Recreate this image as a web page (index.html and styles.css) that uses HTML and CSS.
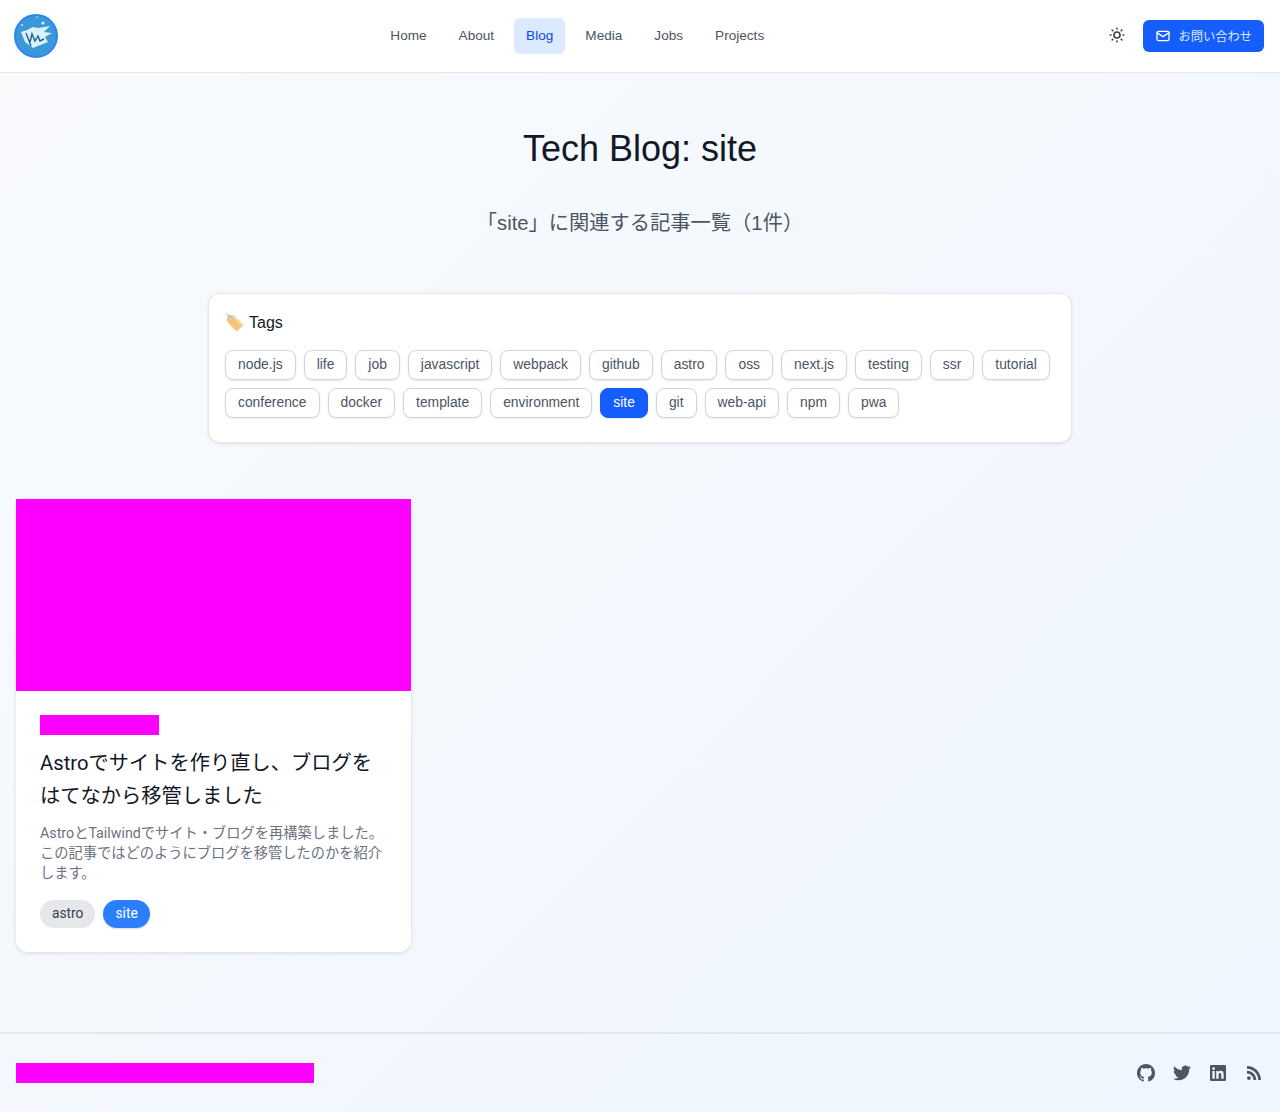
FILE: index.html
```html
<!DOCTYPE html>
<html lang="ja">
  <head>
    <meta charset="UTF-8" />
    <meta name="viewport" content="width=device-width, initial-scale=1.0" />
    <title>Tech Blog: site</title>
    <link rel="stylesheet" href="styles.css">
  </head>
  <body>
    <header class="site-header">
      <a class="logo" href="#">
        <svg viewBox="0 0 44 44" width="44" height="44">
          <circle cx="22" cy="22" r="21" fill="#3a97d8" stroke="#2b86f0" stroke-width="2" />
          <circle cx="29" cy="9" r="1.6" fill="#d8eefa" />
          <circle cx="8" cy="11" r="1" fill="#d8eefa" />
          <circle cx="23" cy="3" r="0.8" fill="#d8eefa" />
          <path d="M7 18 L13 16 L19 13 L24 14 L36 12 L30 18 L38 19 L31 23 L34 28 L19 34 L11 28 Z" fill="#d9f1fb" />
          <path d="M12 19 L17 32 M16 28 L18 20 L21 27 L24 22 L26 27 L30 25" fill="none" stroke="#1d5f86" stroke-width="1.4" />
        </svg>
      </a>
      <nav class="main-nav">
        <a href="#">Home</a>
        <a href="#">About</a>
        <a href="#" class="active">Blog</a>
        <a href="#">Media</a>
        <a href="#">Jobs</a>
        <a href="#">Projects</a>
      </nav>
      <div class="header-actions">
        <button class="theme-btn" type="button" aria-label="theme">
          <svg viewBox="0 0 24 24" width="18" height="18" fill="none" stroke="#374151" stroke-width="2.2" stroke-linecap="round" stroke-linejoin="round">
            <path d="M12 12m-4 0a4 4 0 1 0 8 0a4 4 0 1 0 -8 0" />
            <path d="M3 12h1m8 -9v1m8 8h1m-9 8v1m-6.4 -15.4l.7 .7m12.1 -.7l-.7 .7m0 11.4l.7 .7m-12.1 -.7l-.7 .7" />
          </svg>
        </button>
        <a class="contact-btn" href="#">
          <svg viewBox="0 0 24 24" width="16" height="16" fill="none" stroke="#fff" stroke-width="2" stroke-linecap="round" stroke-linejoin="round">
            <path d="M3 7a2 2 0 0 1 2 -2h14a2 2 0 0 1 2 2v10a2 2 0 0 1 -2 2h-14a2 2 0 0 1 -2 -2v-10z" />
            <path d="M3 7l9 6l9 -6" />
          </svg>
          お問い合わせ
        </a>
      </div>
    </header>

    <main class="content">
      <h1>Tech Blog: site</h1>
      <p class="subtitle">「site」に関連する記事一覧（1件）</p>

      <section class="tags-card">
        <h2>
          <svg viewBox="0 0 20 20" width="20" height="20">
            <path d="M2 5 L3 2 L9 2.5 L18.5 12 L11.5 18.5 L2.5 9 Z" fill="#f7c27a" />
            <path d="M9 2.5 L18.5 12 L17 13.5 L7.5 4 Z" fill="#fbd79f" />
            <circle cx="5.5" cy="5.5" r="1.4" fill="#fff" stroke="#8fb8c9" stroke-width="0.8" />
            <path d="M1 2 C3 0.5 6 2 5.5 5.5" fill="none" stroke="#8fb8c9" stroke-width="0.8" />
          </svg>
          Tags
        </h2>
        <div class="tag-list">
          <a href="#" class="tag">node.js</a>
          <a href="#" class="tag">life</a>
          <a href="#" class="tag">job</a>
          <a href="#" class="tag">javascript</a>
          <a href="#" class="tag">webpack</a>
          <a href="#" class="tag">github</a>
          <a href="#" class="tag">astro</a>
          <a href="#" class="tag">oss</a>
          <a href="#" class="tag">next.js</a>
          <a href="#" class="tag">testing</a>
          <a href="#" class="tag">ssr</a>
          <a href="#" class="tag">tutorial</a>
          <a href="#" class="tag">conference</a>
          <a href="#" class="tag">docker</a>
          <a href="#" class="tag">template</a>
          <a href="#" class="tag">environment</a>
          <a href="#" class="tag active">site</a>
          <a href="#" class="tag">git</a>
          <a href="#" class="tag">web-api</a>
          <a href="#" class="tag">npm</a>
          <a href="#" class="tag">pwa</a>
        </div>
      </section>

      <div class="post-grid">
        <article class="post-card">
          <div class="post-image"></div>
          <div class="post-body">
            <div class="post-date"></div>
            <h3>Astroでサイトを作り直し、ブログをはてなから移管しました</h3>
            <p>AstroとTailwindでサイト・ブログを再構築しました。この記事ではどのようにブログを移管したのかを紹介します。</p>
            <div class="post-tags">
              <a href="#" class="pill">astro</a>
              <a href="#" class="pill current">site</a>
            </div>
          </div>
        </article>
      </div>
    </main>

    <footer class="site-footer">
      <div class="copyright"></div>
      <div class="social">
        <a href="#" aria-label="github">
          <svg viewBox="0 0 16 16" width="18" height="18"><path d="M8 0C3.58 0 0 3.58 0 8c0 3.54 2.29 6.53 5.47 7.59.4.07.55-.17.55-.38 0-.19-.01-.82-.01-1.49-2.01.37-2.53-.49-2.69-.94-.09-.23-.48-.94-.82-1.13-.28-.15-.68-.52-.01-.53.63-.01 1.08.58 1.23.82.72 1.21 1.87.87 2.33.66.07-.52.28-.87.51-1.07-1.78-.2-3.64-.89-3.64-3.95 0-.87.31-1.59.82-2.15-.08-.2-.36-1.02.08-2.12 0 0 .67-.21 2.2.82.64-.18 1.32-.27 2-.27.68 0 1.36.09 2 .27 1.53-1.04 2.2-.82 2.2-.82.44 1.1.16 1.92.08 2.12.51.56.82 1.27.82 2.15 0 3.07-1.87 3.75-3.65 3.95.29.25.54.73.54 1.48 0 1.07-.01 1.93-.01 2.2 0 .21.15.46.55.38A8.013 8.013 0 0016 8c0-4.42-3.58-8-8-8z" /></svg>
        </a>
        <a href="#" aria-label="twitter">
          <svg viewBox="0 0 24 24" width="18" height="18"><path d="M23.953 4.57a10 10 0 01-2.825.775 4.958 4.958 0 002.163-2.723c-.951.555-2.005.959-3.127 1.184a4.92 4.92 0 00-8.384 4.482C7.69 8.095 4.067 6.13 1.64 3.162a4.822 4.822 0 00-.666 2.475c0 1.71.87 3.213 2.188 4.096a4.904 4.904 0 01-2.228-.616v.06a4.923 4.923 0 003.946 4.827 4.996 4.996 0 01-2.212.085 4.936 4.936 0 004.604 3.417 9.867 9.867 0 01-6.102 2.105c-.39 0-.779-.023-1.17-.067a13.995 13.995 0 007.557 2.209c9.053 0 13.998-7.496 13.998-13.985 0-.21 0-.42-.015-.63A9.935 9.935 0 0024 4.59z" /></svg>
        </a>
        <a href="#" aria-label="linkedin">
          <svg viewBox="0 0 24 24" width="16" height="16"><path d="M20.447 20.452h-3.554v-5.569c0-1.328-.027-3.037-1.852-3.037-1.853 0-2.136 1.445-2.136 2.939v5.667H9.351V9h3.414v1.561h.046c.477-.9 1.637-1.85 3.37-1.85 3.601 0 4.267 2.37 4.267 5.455v6.286zM5.337 7.433c-1.144 0-2.063-.926-2.063-2.065 0-1.138.92-2.063 2.063-2.063 1.14 0 2.064.925 2.064 2.063 0 1.139-.925 2.065-2.064 2.065zm1.782 13.019H3.555V9h3.564v11.452zM22.225 0H1.771C.792 0 0 .774 0 1.729v20.542C0 23.227.792 24 1.771 24h20.451C23.2 24 24 23.227 24 22.271V1.729C24 .774 23.2 0 22.222 0h.003z" /></svg>
        </a>
        <a href="#" aria-label="rss">
          <svg viewBox="0 0 24 24" width="14" height="14"><path d="M19.199 24C19.199 13.467 10.533 4.8 0 4.8V0c13.165 0 24 10.835 24 24h-4.801zM3.291 17.415c1.814 0 3.293 1.479 3.293 3.295 0 1.813-1.485 3.29-3.301 3.29C1.47 24 0 22.526 0 20.71s1.475-3.294 3.291-3.295zM15.909 24h-4.665c0-6.169-5.075-11.245-11.244-11.245V8.09c8.727 0 15.909 7.184 15.909 15.91z" /></svg>
        </a>
      </div>
    </footer>
  </body>
</html>
```
FILE: styles.css
```css
* {
  box-sizing: border-box;
}
body {
  font-family: "Liberation Sans", "Noto Sans CJK JP", sans-serif;
  background: linear-gradient(135deg, #f8fafc, #eff6ff);
  color: #111827;
  margin: 0;
  min-height: 100vh;
  display: flex;
  flex-direction: column;
}
a {
  text-decoration: none;
}
.site-header {
  height: 73px;
  padding: 0 16px;
  display: flex;
  align-items: center;
  justify-content: space-between;
  background-color: #fff;
  border-bottom: 1px solid #e5e7eb;
}
.logo {
  width: 40px;
  height: 44px;
  display: flex;
  justify-content: center;
}
.logo svg {
  flex: none;
}
.main-nav {
  display: flex;
  gap: 8px;
}
.main-nav a {
  height: 36px;
  padding: 0 12px 2px;
  display: flex;
  align-items: center;
  border-radius: 6px;
  font-size: 13.6px;
  color: #4b5563;
}
.main-nav a.active {
  background-color: #dbeafe;
  color: #1447e6;
}
.header-actions {
  display: flex;
  align-items: center;
  gap: 8px;
}
.theme-btn {
  width: 36px;
  height: 36px;
  padding: 0 0 2px;
  border: none;
  background: none;
  display: flex;
  align-items: center;
  justify-content: center;
}
.contact-btn {
  height: 32px;
  padding: 0 12px;
  display: flex;
  align-items: center;
  gap: 8px;
  border-radius: 6px;
  background-color: #155dfc;
  color: #dbeafe;
  font-size: 12.25px;
}
.content {
  flex: 1;
  padding: 56px 16px 80px;
}
h1 {
  margin: 0 0 40px;
  text-align: center;
  font-size: 36px;
  line-height: 40px;
  font-weight: 400;
  color: #111827;
}
.subtitle {
  margin: 0 0 56px;
  text-align: center;
  font-size: 20.25px;
  line-height: 28px;
  color: #4b5563;
}
.tags-card {
  width: 864px;
  margin: 0 auto 56px;
  padding: 16px 16px 24px;
  background-color: #fff;
  border: 1px solid #e5e7eb;
  border-radius: 12px;
  box-shadow: 0 1px 3px rgba(0, 0, 0, 0.1);
}
.tags-card h2 {
  margin: 0 0 14px;
  display: flex;
  align-items: center;
  gap: 4px;
  font-size: 16px;
  line-height: 26px;
  font-weight: 400;
  color: #111827;
}
.tag-list {
  display: flex;
  flex-wrap: wrap;
  gap: 8px;
}
.tag {
  height: 30px;
  padding: 0 12px 2px;
  display: flex;
  align-items: center;
  background-color: #fff;
  border: 1px solid #d1d5db;
  border-radius: 8px;
  box-shadow: 0 1px 2px rgba(0, 0, 0, 0.08);
  font-size: 13.85px;
  color: #4b5563;
}
.tag.active {
  background-color: #155dfc;
  border-color: #155dfc;
  color: #fff;
}
.post-grid {
  display: grid;
  grid-template-columns: repeat(3, 1fr);
  gap: 32px;
}
.post-card {
  background-color: #fff;
  border-radius: 12px;
  box-shadow: 0 1px 4px rgba(0, 0, 0, 0.12);
}
.post-image {
  height: 192px;
  background-color: #f0f;
}
.post-body {
  padding: 24px;
}
.post-date {
  width: 119px;
  height: 20px;
  background-color: #f0f;
}
.post-body h3 {
  margin: 12px 0 10px;
  font-family: Roboto, "Noto Sans CJK JP", sans-serif;
  font-size: 20.25px;
  line-height: 33px;
  font-weight: 400;
  color: #111827;
}
.post-body p {
  margin: 0 0 17px;
  font-family: Roboto, "Noto Sans CJK JP", sans-serif;
  font-size: 14.25px;
  line-height: 20px;
  color: #6b7280;
}
.post-tags {
  display: flex;
  gap: 8px;
}
.pill {
  height: 28px;
  padding: 0 12px 2px;
  display: flex;
  align-items: center;
  border-radius: 14px;
  background-color: #e5e7eb;
  font-family: Roboto, sans-serif;
  font-size: 13.75px;
  color: #374151;
}
.pill.current {
  background-color: #2b7fff;
  color: #fff;
  box-shadow: 0 1px 2px rgba(0, 0, 0, 0.15);
}
.site-footer {
  height: 80px;
  padding: 0 8px 0 16px;
  display: flex;
  align-items: center;
  justify-content: space-between;
  border-top: 2px solid #e5e7eb;
}
.copyright {
  width: 298px;
  height: 20px;
  background-color: #f0f;
}
.social {
  display: flex;
  align-items: center;
}
.social a {
  width: 36px;
  height: 36px;
  display: flex;
  align-items: center;
  justify-content: center;
  fill: #4b5563;
}
```
